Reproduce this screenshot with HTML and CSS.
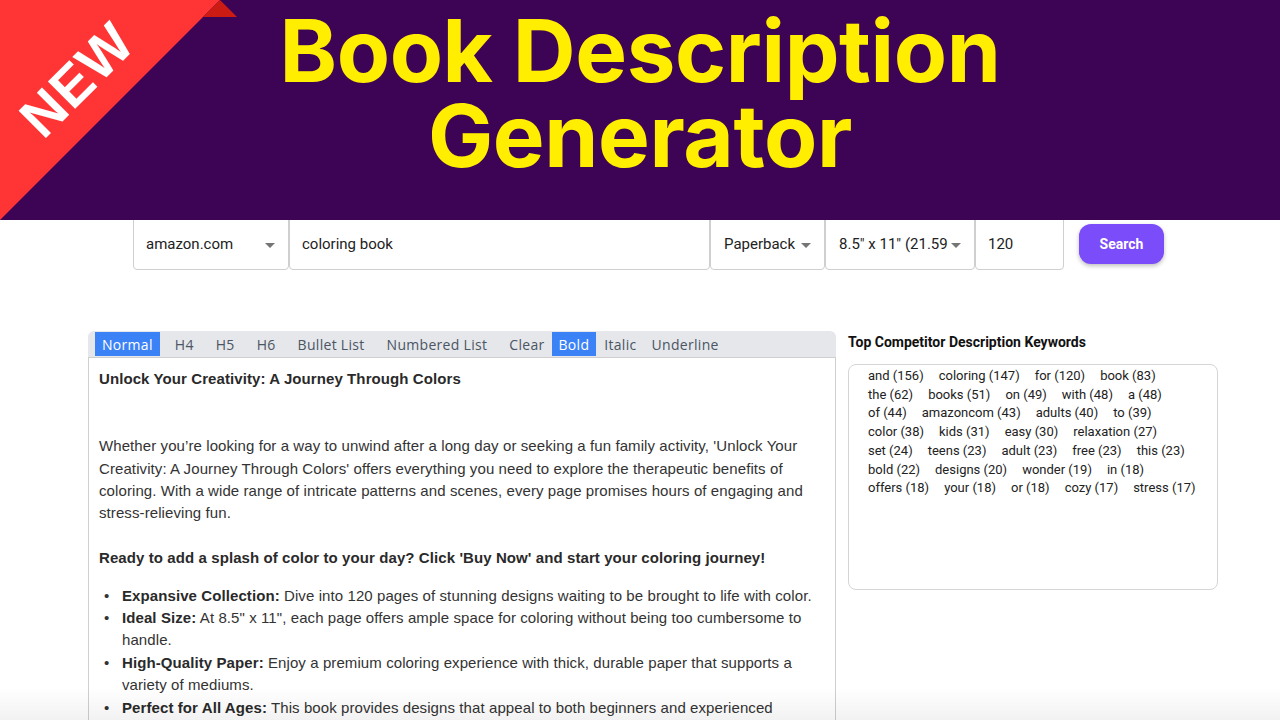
FILE: index.html
```html
<!DOCTYPE html>
<html lang="en">
<head>
<meta charset="utf-8">
<title>Book Description Generator</title>
<link rel="stylesheet" href="styles.css">
</head>
<body>
<header class="hero">
  <div class="ribbon">
    <svg class="ribbon-svg" width="240" height="220" viewBox="0 0 240 220">
      <polygon points="0,0 220,0 0,220" fill="#ff3434"/>
      <polygon points="203,17 220,0 237,17" fill="#cc1b12"/>
    </svg>
    <span class="ribbon-text">NEW</span>
  </div>
  <h1 class="hero-title">Book Description<br>Generator</h1>
</header>

<section class="search-row">
  <div class="field field-market">
    <span class="field-value">amazon.com</span>
    <span class="caret"></span>
  </div>
  <div class="field field-keyword">
    <span class="field-label">Keyword</span>
    <span class="field-value">coloring book</span>
  </div>
  <div class="field field-format">
    <span class="field-value">Paperback</span>
    <span class="caret"></span>
  </div>
  <div class="field field-size">
    <span class="field-value clip">8.5" x 11" (21.59 x 27.94 cm)</span>
    <span class="caret"></span>
  </div>
  <div class="field field-pages">
    <span class="field-label">Page Count</span>
    <span class="field-value">120</span>
  </div>
  <button class="search-btn">Search</button>
</section>

<main class="content">
  <div class="editor">
    <div class="toolbar">
      <div class="tb-group tb-a">
        <button class="tb-btn active">Normal</button>
        <button class="tb-btn">H4</button>
        <button class="tb-btn">H5</button>
        <button class="tb-btn">H6</button>
        <button class="tb-btn">Bullet List</button>
        <button class="tb-btn">Numbered List</button>
        <button class="tb-btn">Clear</button>
      </div>
      <div class="tb-group tb-b">
        <button class="tb-btn active">Bold</button>
        <button class="tb-btn">Italic</button>
        <button class="tb-btn">Underline</button>
      </div>
    </div>
    <div class="editor-body">
      <p><strong>Unlock Your Creativity: A Journey Through Colors</strong></p>
      <p><br></p>
      <p><br></p>
      <p>Whether you’re looking for a way to unwind after a long day or seeking a fun family activity, 'Unlock Your Creativity: A Journey Through Colors' offers everything you need to explore the therapeutic benefits of coloring. With a wide range of intricate patterns and scenes, every page promises hours of engaging and stress-relieving fun.</p>
      <p><br></p>
      <p><strong>Ready to add a splash of color to your day? Click 'Buy Now' and start your coloring journey!</strong></p>
      <ul>
        <li><strong>Expansive Collection:</strong> Dive into 120 pages of stunning designs waiting to be brought to life with color.</li>
        <li><strong>Ideal Size:</strong> At 8.5" x 11", each page offers ample space for coloring without being too cumbersome to handle.</li>
        <li><strong>High-Quality Paper:</strong> Enjoy a premium coloring experience with thick, durable paper that supports a variety of mediums.</li>
        <li><strong>Perfect for All Ages:</strong> This book provides designs that appeal to both beginners and experienced colorists alike.</li>
      </ul>
    </div>
  </div>

  <aside class="keywords">
    <h2 class="kw-title">Top Competitor Description Keywords</h2>
    <div class="kw-box">
      <div class="kw-line"><span>and (156)</span><span>coloring (147)</span><span>for (120)</span><span>book (83)</span></div>
      <div class="kw-line"><span>the (62)</span><span>books (51)</span><span>on (49)</span><span>with (48)</span><span>a (48)</span></div>
      <div class="kw-line"><span>of (44)</span><span>amazoncom (43)</span><span>adults (40)</span><span>to (39)</span></div>
      <div class="kw-line"><span>color (38)</span><span>kids (31)</span><span>easy (30)</span><span>relaxation (27)</span></div>
      <div class="kw-line"><span>set (24)</span><span>teens (23)</span><span>adult (23)</span><span>free (23)</span><span>this (23)</span></div>
      <div class="kw-line"><span>bold (22)</span><span>designs (20)</span><span>wonder (19)</span><span>in (18)</span></div>
      <div class="kw-line"><span>offers (18)</span><span>your (18)</span><span>or (18)</span><span>cozy (17)</span><span>stress (17)</span></div>
    </div>
  </aside>
</main>

<div class="bottom-fade"></div>
</body>
</html>
```

FILE: styles.css
```css
* { box-sizing: border-box; }

html, body {
  margin: 0;
  padding: 0;
  background: #ffffff;
  overflow: hidden;
  height: 720px;
}

body {
  font-family: "Liberation Sans", Arial, sans-serif;
  color: #333;
}

/* ---------- header ---------- */
.hero {
  position: relative;
  z-index: 2;
  height: 220px;
  background: #3d0354;
  display: flex;
  justify-content: center;
  align-items: flex-start;
}

.ribbon {
  position: absolute;
  left: 0;
  top: 0;
  width: 240px;
  height: 220px;
}

.ribbon-svg { display: block; }

.ribbon-text {
  position: absolute;
  left: 77px;
  top: 80px;
  transform: translate(-50%, -50%) rotate(-45deg);
  font-family: "Liberation Sans", Arial, sans-serif;
  font-weight: 700;
  font-size: 56px;
  line-height: 1;
  color: #ffffff;
  letter-spacing: 1px;
}

.hero-title {
  margin: 0;
  padding-top: 8px;
  font-family: Inter, "Noto Sans", sans-serif;
  font-weight: 700;
  font-size: 87px;
  line-height: 85px;
  color: #ffee00;
  text-align: center;
  letter-spacing: -0.4px;
}

/* ---------- search row ---------- */
.search-row {
  position: relative;
  z-index: 1;
  margin-top: -6px;
  display: flex;
  align-items: center;
  padding-left: 133px;
  font-family: Roboto, sans-serif;
}

.field {
  position: relative;
  height: 56px;
  border: 1px solid #cfcfcf;
  border-radius: 4px;
  display: flex;
  align-items: center;
  padding: 4px 12px 0 12px;
  font-size: 15px;
  color: #222;
}

.field-market { width: 156px; }
.field-keyword { width: 421px; }
.field-format { width: 115px; }
.field-size { width: 150px; }
.field-pages { width: 89px; }

.field-format, .field-size { padding-left: 13px; }

.field-value { white-space: nowrap; }
.field-value.clip {
  overflow: hidden;
  width: 112px;
}

.field-label {
  position: absolute;
  left: 9px;
  top: -8px;
  padding: 0 3px;
  font-size: 11px;
  color: #777;
  background: #fff;
}

.caret {
  position: absolute;
  right: 13px;
  top: 28px;
  width: 0;
  height: 0;
  border-left: 5px solid transparent;
  border-right: 5px solid transparent;
  border-top: 5px solid #757575;
}

.search-btn {
  margin-left: 15px;
  margin-top: 4px;
  width: 85px;
  height: 40px;
  border: none;
  border-radius: 12px;
  background: #7b4cf9;
  color: #fff;
  font-family: Roboto, sans-serif;
  font-weight: 700;
  font-size: 14px;
  box-shadow: 0 2px 4px rgba(0,0,0,0.25);
}

/* ---------- content ---------- */
.content {
  display: flex;
  align-items: flex-start;
  padding-left: 88px;
  margin-top: 61px;
}

.editor {
  width: 748px;
}

.toolbar {
  height: 27px;
  background: #e5e7eb;
  border-radius: 6px 6px 0 0;
  display: flex;
  align-items: flex-start;
  padding: 1px 0 0 7px;
  border-bottom: 1px solid #cfcfcf;
}

.tb-group { display: flex; }
.tb-a { gap: 8px; }
.tb-b { gap: 1px; margin-left: 0; }

.tb-btn {
  height: 24px;
  border: none;
  background: transparent;
  padding: 0 7px;
  font-family: "Open Sans", sans-serif;
  font-size: 14px;
  color: #4b5563;
  letter-spacing: 0.3px;
}

.tb-btn.active {
  background: #3b82f6;
  color: #fff;
  font-weight: 500;
}

.editor-body {
  border: 1px solid #cfcfcf;
  border-top: none;
  height: 400px;
  padding: 10px 10px;
  font-size: 15px;
  line-height: 22.4px;
  letter-spacing: 0.09px;
  color: #333;
}

.editor-body p { margin: 0; }
.editor-body strong { color: #2a2a2a; }

.editor-body ul {
  margin: 15px 0 0 0;
  padding-left: 23px;
  list-style: none;
}

.editor-body li { position: relative; }

.editor-body li::before {
  content: "\2022";
  position: absolute;
  left: -18px;
  top: 0;
  color: #333;
}

.keywords {
  margin-left: 12px;
  width: 370px;
}

.kw-title {
  margin: 3px 0 14px 0;
  font-family: Roboto, sans-serif;
  font-size: 14px;
  font-weight: 700;
  color: #111;
  line-height: 16px;
}

.kw-box {
  height: 226px;
  border: 1px solid #d5d5d5;
  border-radius: 8px;
  padding: 2px 10px 0 19px;
  font-family: Roboto, sans-serif;
  font-size: 13px;
  line-height: 18.7px;
  color: #222;
}

.kw-line { display: flex; gap: 15px; white-space: nowrap; }

.bottom-fade {
  position: fixed;
  left: 0;
  right: 0;
  bottom: 0;
  height: 32px;
  background: linear-gradient(to bottom, rgba(0,0,0,0), rgba(0,0,0,0.05));
  pointer-events: none;
}
```
